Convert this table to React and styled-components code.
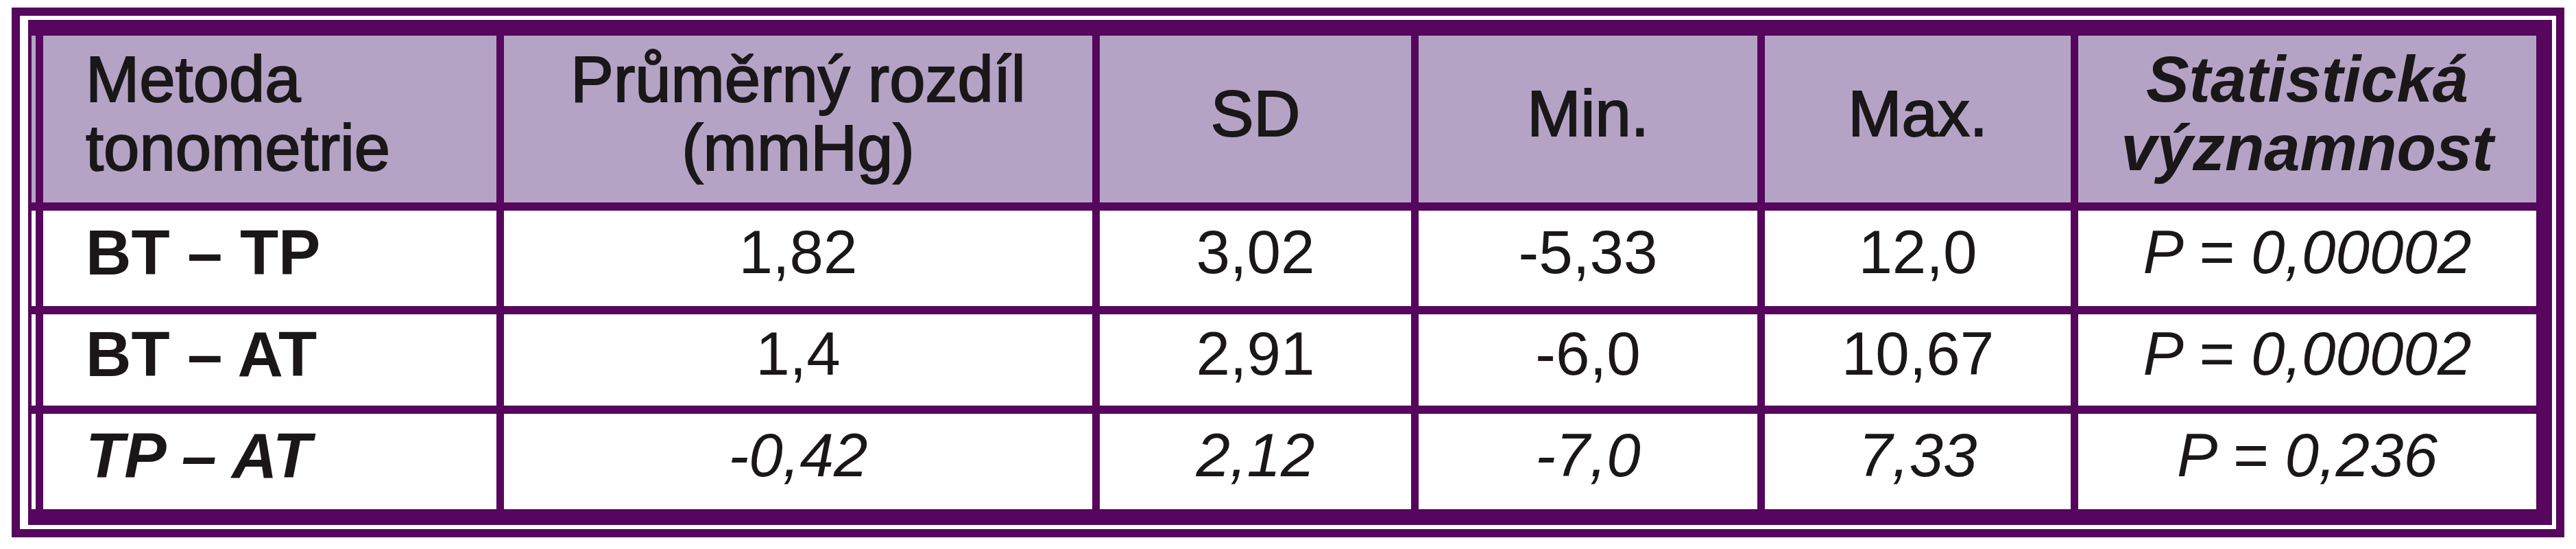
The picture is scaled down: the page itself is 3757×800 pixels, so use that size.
import React from "react";
import styled, { createGlobalStyle } from "styled-components";

const colors = {
  frame: "#56075d",
  header: "#b5a3c6",
  body: "#ffffff",
  text: "#1b1719",
};

const GlobalStyle = createGlobalStyle`
  html, body {
    margin: 0;
    padding: 0;
    background: #ffffff;
  }
  body {
    font-family: "Liberation Sans", Arial, sans-serif;
    color: ${colors.text};
  }
`;

const Page = styled.div`
  padding: 11px 17px;
`;

const OuterFrame = styled.div`
  border: 12px solid ${colors.frame};
  padding: 6px 6px 6px 12px;
  background: #ffffff;
`;

const InnerFrame = styled.div`
  border: 23px solid ${colors.frame};
  border-left-width: 5px;
  background: ${colors.frame};
`;

const Grid = styled.div`
  display: grid;
  grid-template-columns: 6px 661px 858px 454px 494px 446px 1fr;
  grid-template-rows: 243px 139px 133px 139px;
  column-gap: 11px;
  row-gap: 12px;
  background: ${colors.frame};
`;

const Edge = styled.div`
  background: ${(p) => (p.$head ? colors.header : colors.body)};
`;

const HeadCell = styled.div`
  background: ${colors.header};
  display: flex;
  flex-direction: column;
  justify-content: center;
  align-items: ${(p) => (p.$left ? "flex-start" : "center")};
  text-align: ${(p) => (p.$left ? "left" : "center")};
  padding: 0 0 16px ${(p) => (p.$left ? "62px" : "0")};
  font-size: 94px;
  line-height: 100px;
  font-style: ${(p) => (p.$italic ? "italic" : "normal")};
  font-weight: ${(p) => (p.$bold ? 700 : 400)};
  -webkit-text-stroke: ${(p) => (p.$bold ? "0" : "2px")} ${colors.text};
  white-space: nowrap;
`;

const Cell = styled.div`
  background: ${colors.body};
  display: flex;
  align-items: center;
  justify-content: ${(p) => (p.$label ? "flex-start" : "center")};
  padding: 0 0 18px ${(p) => (p.$label ? "62px" : "0")};
  font-size: ${(p) => (p.$label ? "92px" : "89px")};
  line-height: 1;
  font-weight: ${(p) => (p.$label ? 700 : 400)};
  font-style: ${(p) => (p.$italic ? "italic" : "normal")};
  white-space: nowrap;
`;

const rows = [
  {
    label: "BT – TP",
    italic: false,
    values: ["1,82", "3,02", "-5,33", "12,0"],
    p: "P = 0,00002",
  },
  {
    label: "BT – AT",
    italic: false,
    values: ["1,4", "2,91", "-6,0", "10,67"],
    p: "P = 0,00002",
  },
  {
    label: "TP – AT",
    italic: true,
    values: ["-0,42", "2,12", "-7,0", "7,33"],
    p: "P = 0,236",
  },
];

export default function App() {
  return (
    <>
      <GlobalStyle />
      <Page>
        <OuterFrame>
          <InnerFrame>
            <Grid>
              <Edge $head />
              <HeadCell $left>
                <span>Metoda</span>
                <span>tonometrie</span>
              </HeadCell>
              <HeadCell>
                <span>Průměrný rozdíl</span>
                <span>(mmHg)</span>
              </HeadCell>
              <HeadCell>SD</HeadCell>
              <HeadCell>Min.</HeadCell>
              <HeadCell>Max.</HeadCell>
              <HeadCell $bold $italic>
                <span>Statistická</span>
                <span>významnost</span>
              </HeadCell>

              {rows.map((row) => (
                <React.Fragment key={row.label}>
                  <Edge />
                  <Cell $label $italic={row.italic}>
                    {row.label}
                  </Cell>
                  {row.values.map((v, i) => (
                    <Cell key={i} $italic={row.italic}>
                      {v}
                    </Cell>
                  ))}
                  <Cell $italic>{row.p}</Cell>
                </React.Fragment>
              ))}
            </Grid>
          </InnerFrame>
        </OuterFrame>
      </Page>
    </>
  );
}
